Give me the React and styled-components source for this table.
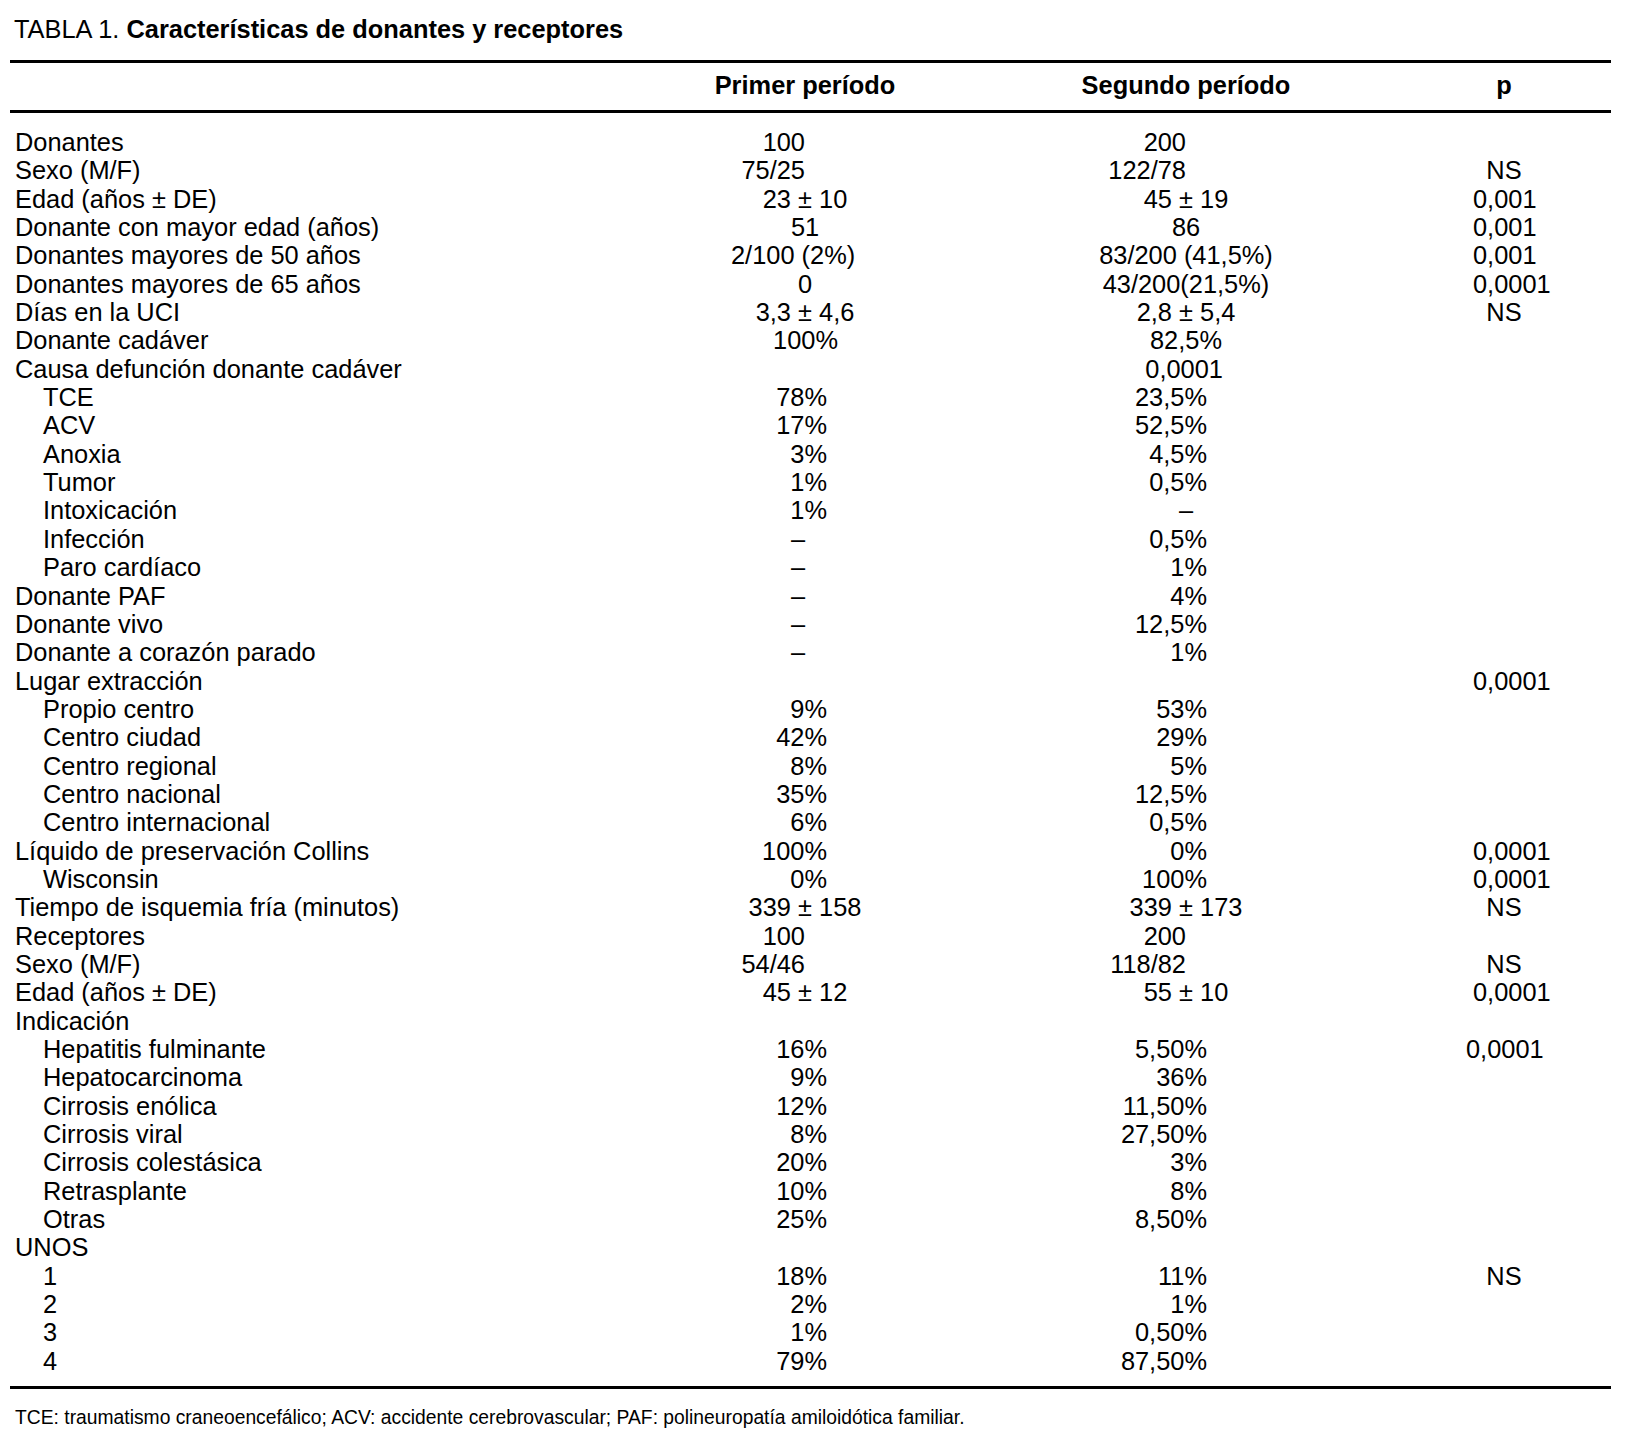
import React from 'react';
import styled, { createGlobalStyle } from 'styled-components';

const R = (t, off = 0) => ({ t, mode: 'r', off });
const C = (t) => ({ t, mode: 'c', off: 0 });
const L = (t, off) => ({ t, mode: 'l', off });
const P = (t) => R(t, 22);
const Q = (t) => R(t, 21);

const rows = [
  { label: 'Donantes', v: [R('100'), R('200')] },
  { label: 'Sexo (M/F)', v: [R('75/25'), R('122/78'), C('NS')] },
  { label: 'Edad (años ± DE)', v: [C('23 ± 10'), C('45 ± 19'), L('0,001', -31)] },
  { label: 'Donante con mayor edad (años)', v: [C('51'), C('86'), L('0,001', -31)] },
  { label: 'Donantes mayores de 50 años', v: [L('2/100 (2%)', -74), C('83/200 (41,5%)'), L('0,001', -31)] },
  { label: 'Donantes mayores de 65 años', v: [C('0'), C('43/200(21,5%)'), L('0,0001', -31)] },
  { label: 'Días en la UCI', v: [C('3,3 ± 4,6'), C('2,8 ± 5,4'), C('NS')] },
  { label: 'Donante cadáver', v: [R('100%', 33), R('82,5%', 36)] },
  { label: 'Causa defunción donante cadáver', v: [null, R('0,0001', 37)] },
  { label: 'TCE', sub: true, v: [P('78%'), Q('23,5%')] },
  { label: 'ACV', sub: true, v: [P('17%'), Q('52,5%')] },
  { label: 'Anoxia', sub: true, v: [P('3%'), Q('4,5%')] },
  { label: 'Tumor', sub: true, v: [P('1%'), Q('0,5%')] },
  { label: 'Intoxicación', sub: true, v: [P('1%'), C('–')] },
  { label: 'Infección', sub: true, v: [R('–'), Q('0,5%')] },
  { label: 'Paro cardíaco', sub: true, v: [R('–'), Q('1%')] },
  { label: 'Donante PAF', v: [R('–'), Q('4%')] },
  { label: 'Donante vivo', v: [R('–'), Q('12,5%')] },
  { label: 'Donante a corazón parado', v: [R('–'), Q('1%')] },
  { label: 'Lugar extracción', v: [null, null, L('0,0001', -31)] },
  { label: 'Propio centro', sub: true, v: [P('9%'), Q('53%')] },
  { label: 'Centro ciudad', sub: true, v: [P('42%'), Q('29%')] },
  { label: 'Centro regional', sub: true, v: [P('8%'), Q('5%')] },
  { label: 'Centro nacional', sub: true, v: [P('35%'), Q('12,5%')] },
  { label: 'Centro internacional', sub: true, v: [P('6%'), Q('0,5%')] },
  { label: 'Líquido de preservación Collins', v: [P('100%'), Q('0%'), L('0,0001', -31)] },
  { label: 'Wisconsin', sub: true, v: [P('0%'), Q('100%'), L('0,0001', -31)] },
  { label: 'Tiempo de isquemia fría (minutos)', v: [C('339 ± 158'), C('339 ± 173'), C('NS')] },
  { label: 'Receptores', v: [R('100'), R('200')] },
  { label: 'Sexo (M/F)', v: [R('54/46'), R('118/82'), C('NS')] },
  { label: 'Edad (años ± DE)', v: [C('45 ± 12'), C('55 ± 10'), L('0,0001', -31)] },
  { label: 'Indicación', v: [] },
  { label: 'Hepatitis fulminante', sub: true, v: [P('16%'), Q('5,50%'), L('0,0001', -38)] },
  { label: 'Hepatocarcinoma', sub: true, v: [P('9%'), Q('36%')] },
  { label: 'Cirrosis enólica', sub: true, v: [P('12%'), Q('11,50%')] },
  { label: 'Cirrosis viral', sub: true, v: [P('8%'), Q('27,50%')] },
  { label: 'Cirrosis colestásica', sub: true, v: [P('20%'), Q('3%')] },
  { label: 'Retrasplante', sub: true, v: [P('10%'), Q('8%')] },
  { label: 'Otras', sub: true, v: [P('25%'), Q('8,50%')] },
  { label: 'UNOS', v: [] },
  { label: '1', sub: true, v: [P('18%'), Q('11%'), C('NS')] },
  { label: '2', sub: true, v: [P('2%'), Q('1%')] },
  { label: '3', sub: true, v: [P('1%'), Q('0,50%')] },
  { label: '4', sub: true, v: [P('79%'), Q('87,50%')] },
];

const GlobalStyle = createGlobalStyle`
  html, body {
    margin: 0;
    padding: 0;
    background: #ffffff;
  }
  body {
    font-family: "Liberation Sans", Arial, sans-serif;
    color: #000000;
  }
`;

const Page = styled.div`
  width: 1601px;
  padding: 15px 0 0 10px;
`;

const Title = styled.div`
  font-size: 25.4px;
  line-height: 28px;
  padding-left: 4px;
  margin-bottom: 17px;
`;

const Bold = styled.span`
  font-weight: 700;
`;

const Rule = styled.div`
  height: 3px;
  background: #000000;
`;

const Grid = styled.div`
  display: grid;
  grid-template-columns: 680px 230px 532px 104px;
  font-size: 25.4px;
`;

const HeadRow = styled(Grid)`
  height: 47px;
  padding-bottom: 4px;
  box-sizing: border-box;
  align-items: center;
  font-weight: 700;
  line-height: 28px;
`;

const HeadCell = styled.div`
  text-align: center;
`;

const Body = styled.div`
  padding: 15px 0 11px;
`;

const Row = styled(Grid)`
  height: 28.35px;
  line-height: 28.35px;
`;

const Label = styled.div`
  padding-left: ${(p) => (p.$sub ? 33 : 5)}px;
  white-space: nowrap;
`;

const Cell = styled.div`
  display: flex;
  white-space: nowrap;
  justify-content: ${(p) =>
    p.$mode === 'r' ? 'flex-end' : p.$mode === 'l' ? 'flex-start' : 'center'};
  padding-right: ${(p) => (p.$mode === 'r' ? `calc(50% - ${p.$off}px)` : '0')};
  padding-left: ${(p) => (p.$mode === 'l' ? `calc(50% + ${p.$off}px)` : '0')};
`;

const Note = styled.div`
  font-size: 19.3px;
  line-height: 22px;
  padding: 18px 0 0 5px;
`;

const App = () => (
  <Page>
    <GlobalStyle />
    <Title>
      TABLA 1. <Bold>Características de donantes y receptores</Bold>
    </Title>
    <Rule />
    <HeadRow>
      <div />
      <HeadCell>Primer período</HeadCell>
      <HeadCell>Segundo período</HeadCell>
      <HeadCell>p</HeadCell>
    </HeadRow>
    <Rule />
    <Body>
      {rows.map((row, i) => (
        <Row key={i}>
          <Label $sub={row.sub}>{row.label}</Label>
          {[0, 1, 2].map((c) => {
            const v = row.v[c];
            return v ? (
              <Cell key={c} $mode={v.mode} $off={v.off}>
                {v.t}
              </Cell>
            ) : (
              <div key={c} />
            );
          })}
        </Row>
      ))}
    </Body>
    <Rule />
    <Note>
      TCE: traumatismo craneoencefálico; ACV: accidente cerebrovascular; PAF: polineuropatía amiloidótica familiar.
    </Note>
  </Page>
);

export default App;
